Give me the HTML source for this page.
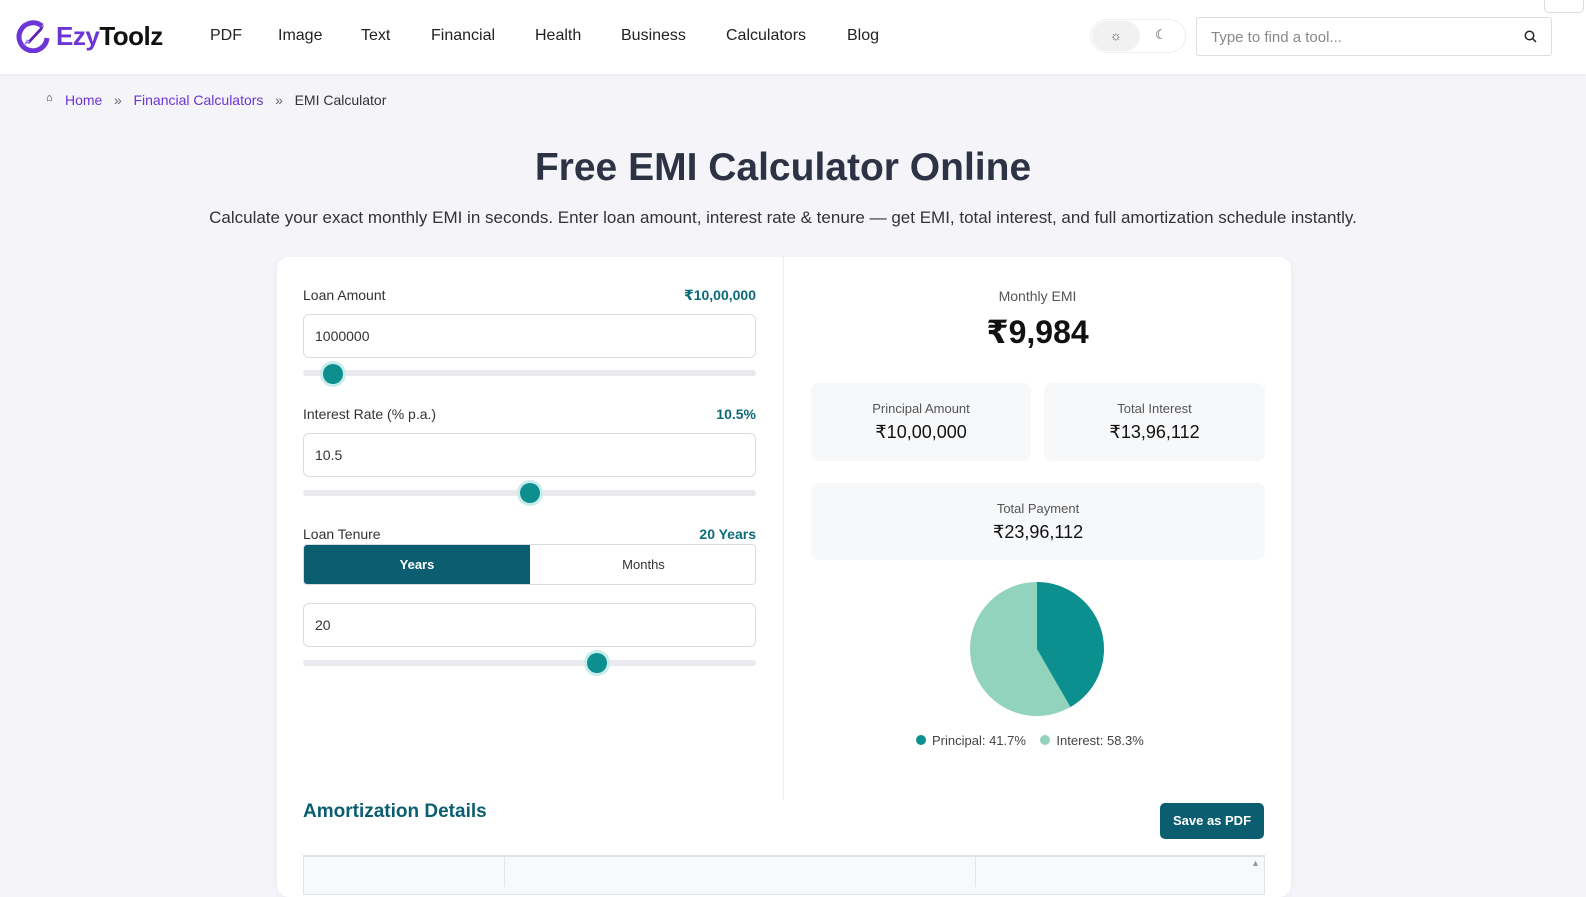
<!DOCTYPE html>
<html><head><meta charset="utf-8"><style>
*{box-sizing:border-box;margin:0;padding:0}
body{width:1586px;height:883px;overflow:hidden;background:#f4f4f9;font-family:"Liberation Sans","DejaVu Sans",sans-serif;color:#1f2937;position:relative}
.hdr{position:absolute;left:0;top:0;width:1586px;height:74px;background:#fff;box-shadow:0 1px 3px rgba(0,0,0,.05)}
.nav a{position:absolute;top:27px;font-size:16px;color:#222;text-decoration:none}
.abs{position:absolute}
.lbl{font-size:14px;color:#333}
.val{font-size:14px;color:#0b6b78;font-weight:bold;text-align:right}
.inp{position:absolute;left:303px;width:453px;height:44px;border:1px solid #d9dde3;border-radius:6px;background:#fff;font-size:14px;padding:13px 11px;color:#333}
.track{position:absolute;left:303px;width:453px;height:6px;border-radius:3px;background:#e8eaed}
.thumb{position:absolute;width:20px;height:20px;border-radius:50%;background:#0d8f8f;box-shadow:0 0 0 3px #c8ecec}
.box{position:absolute;background:#f7f8fa;border-radius:8px;text-align:center}
.box .t{font-size:13px;color:#555;margin-top:18px}
.box .v{font-size:18px;color:#111;margin-top:6px}
</style></head><body>
<div class="hdr">
<svg class="abs" style="left:16px;top:19px" width="34" height="34" viewBox="0 0 34 34"><path d="M26 7 A14 14 0 1 0 31 19" fill="none" stroke="#6d35d6" stroke-width="5"/><path d="M11 23 L24 9 L28 6 L26 11 L13 25 Z" fill="#5b21b6"/><path d="M7 27 L11 20 L14 23Z" fill="#a78bfa"/></svg>
<div class="abs" style="left:56px;top:21px;font-size:26px;font-weight:bold;letter-spacing:-0.5px"><span style="color:#6d35d6">Ezy</span><span style="color:#111">Toolz</span></div>
<div class="nav"><a style="left:210px">PDF</a><a style="left:278px">Image</a><a style="left:361px">Text</a><a style="left:431px">Financial</a><a style="left:535px">Health</a><a style="left:621px">Business</a><a style="left:726px">Calculators</a><a style="left:847px">Blog</a></div>
<div class="abs" style="left:1090px;top:19px;width:96px;height:34px;border-radius:17px;border:1px solid #eee;background:#fff"></div>
<div class="abs" style="left:1092px;top:21px;width:48px;height:30px;border-radius:15px;background:#f1f1f1;text-align:center;font-size:13px;line-height:30px;color:#555">☼</div>
<div class="abs" style="left:1155px;top:27px;font-size:13px;color:#444">☾</div>
<div class="abs" style="left:1196px;top:17px;width:356px;height:39px;border:1px solid #ddd;border-radius:3px;font-size:15px;color:#888;padding:11px 14px">Type to find a tool...</div>
<svg class="abs" style="left:1524px;top:30px" width="13" height="13" viewBox="0 0 13 13"><circle cx="5.5" cy="5.5" r="4.2" fill="none" stroke="#222" stroke-width="1.5"/><path d="M8.6 8.6L12 12" stroke="#222" stroke-width="1.5"/></svg>
<div class="abs" style="left:1544px;top:-5px;width:40px;height:18px;border:1px solid #ddd;border-radius:5px;background:#fff"></div>
</div>
<div class="abs" style="left:46px;top:92px;font-size:11px">⌂</div>
<div class="abs" style="left:65px;top:92px;font-size:14px;color:#666"><span style="color:#6d35d6">Home</span> &nbsp; » &nbsp; <span style="color:#6d35d6">Financial Calculators</span> &nbsp; » &nbsp; <span style="color:#333">EMI Calculator</span></div>
<div class="abs" style="left:0;width:1566px;top:146px;text-align:center;font-size:39px;font-weight:bold;color:#2d3344">Free EMI Calculator Online</div>
<div class="abs" style="left:0;width:1566px;top:208px;text-align:center;font-size:17px;color:#333">Calculate your exact monthly EMI in seconds. Enter loan amount, interest rate &amp; tenure — get EMI, total interest, and full amortization schedule instantly.</div>
<div class="abs" style="left:277px;top:257px;width:1014px;height:640px;background:#fff;border-radius:12px;box-shadow:0 2px 8px rgba(0,0,0,.04)"></div>
<div class="abs" style="left:783px;top:257px;width:1px;height:543px;background:#eceef1"></div>
<div class="abs lbl" style="left:303px;top:287px">Loan Amount</div><div class="abs val" style="left:600px;width:156px;top:287px">₹10,00,000</div>
<div class="inp" style="top:314px">1000000</div>
<div class="track" style="top:370px"></div><div class="thumb" style="left:323px;top:364px"></div>
<div class="abs lbl" style="left:303px;top:406px">Interest Rate (% p.a.)</div><div class="abs val" style="left:600px;width:156px;top:406px">10.5%</div>
<div class="inp" style="top:433px">10.5</div>
<div class="track" style="top:490px"></div><div class="thumb" style="left:520px;top:483px"></div>
<div class="abs lbl" style="left:303px;top:526px">Loan Tenure</div><div class="abs val" style="left:600px;width:156px;top:526px">20 Years</div>
<div class="abs" style="left:303px;top:544px;width:453px;height:41px;border:1px solid #d9dde3;border-radius:4px;overflow:hidden;font-size:13px">
<div class="abs" style="left:0;top:0;width:226px;height:41px;background:#0b5e70;color:#fff;text-align:center;line-height:40px;font-weight:bold">Years</div>
<div class="abs" style="left:226px;top:0;width:227px;height:41px;color:#333;text-align:center;line-height:40px">Months</div></div>
<div class="inp" style="top:603px">20</div>
<div class="track" style="top:660px"></div><div class="thumb" style="left:587px;top:653px"></div>
<div class="abs" style="left:784px;width:507px;top:288px;text-align:center;font-size:14px;color:#555">Monthly EMI</div>
<div class="abs" style="left:784px;width:507px;top:313px;text-align:center;font-size:32px;font-weight:bold;color:#111">₹9,984</div>
<div class="box" style="left:811px;top:383px;width:220px;height:78px"><div class="t">Principal Amount</div><div class="v">₹10,00,000</div></div>
<div class="box" style="left:1044px;top:383px;width:221px;height:78px"><div class="t">Total Interest</div><div class="v">₹13,96,112</div></div>
<div class="box" style="left:811px;top:483px;width:454px;height:77px"><div class="t">Total Payment</div><div class="v">₹23,96,112</div></div>
<svg class="abs" style="left:970px;top:582px" width="134" height="134" viewBox="0 0 134 134"><circle cx="67" cy="67" r="67" fill="#92d3bd"/><path d="M67 67 L67 0 A67 67 0 0 1 100.5 125 Z" fill="#0b8f8f"/></svg>
<div class="abs" style="left:916px;top:733px;font-size:13px;color:#444"><span style="display:inline-block;width:10px;height:10px;border-radius:50%;background:#0b8f8f;margin-right:6px"></span>Principal: 41.7% &nbsp;&nbsp; <span style="display:inline-block;width:10px;height:10px;border-radius:50%;background:#92d3bd;margin-right:6px"></span>Interest: 58.3%</div>
<div class="abs" style="left:303px;top:801px;font-size:19px;font-weight:bold;color:#0b5e70">Amortization Details</div>
<div class="abs" style="left:1160px;top:803px;width:104px;height:36px;border-radius:5px;background:#0b5e70;color:#fff;font-size:13px;font-weight:bold;text-align:center;line-height:36px">Save as PDF</div>
<div class="abs" style="left:303px;top:855px;width:962px;height:40px;border:1px solid #dfe2e6;border-top:2px solid #dfe2e6;background:#f8f9fa"></div>
<div class="abs" style="left:504px;top:857px;width:1px;height:30px;background:#e3e5e8"></div>
<div class="abs" style="left:975px;top:857px;width:1px;height:30px;background:#e3e5e8"></div>
<div class="abs" style="left:1251px;top:858px;font-size:9px;color:#999">▲</div>
</body></html>
